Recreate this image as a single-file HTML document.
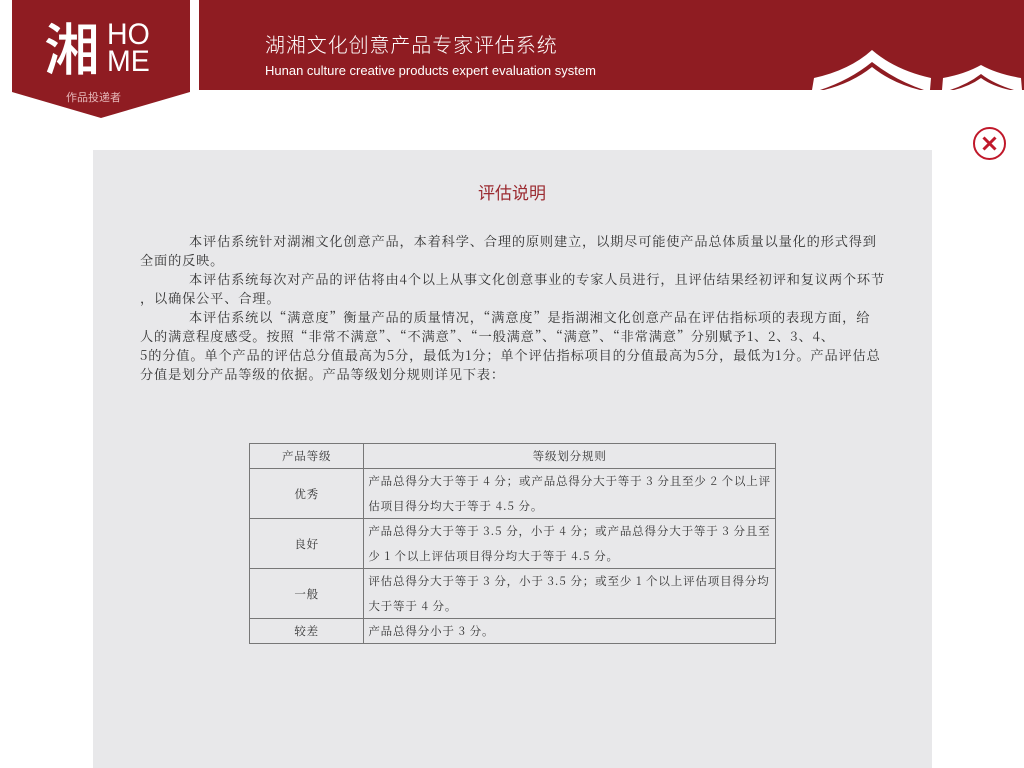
<!DOCTYPE html>
<html><head><meta charset="utf-8">
<style>
*{margin:0;padding:0;box-sizing:border-box}
body{width:1024px;height:768px;overflow:hidden;background:#fff;position:relative;font-family:"Liberation Sans","Noto Sans CJK SC",sans-serif}
.abs{position:absolute}
.bar{left:199px;top:0;width:825px;height:90px;background:#8f1c22}
.cn{left:265px;top:33px;font-size:20px;color:#fff;font-weight:300;letter-spacing:0.9px;white-space:nowrap;line-height:26px}
.en{left:265px;top:63px;font-size:13px;color:#fff;white-space:nowrap;line-height:16px}
.panel{left:93px;top:150px;width:839px;height:618px;background:#e8e8ea}
.title{left:0;width:1024px;top:183px;text-align:center;color:#9b2a30;font-size:17px;line-height:22px}
.para{left:140px;top:231px;width:760px;font-size:13.2px;line-height:19px;color:#333;letter-spacing:0.85px;font-family:"Noto Serif CJK SC","Liberation Serif",serif}
.para div{white-space:nowrap}
.ind{padding-left:49px}
table{position:absolute;left:249px;top:443px;width:527px;border-collapse:collapse;font-family:"Noto Serif CJK SC","Liberation Serif",serif;font-size:11.5px;color:#333}
td{border:1px solid #777;padding:0 4px;letter-spacing:0.85px;white-space:nowrap}
td.c{text-align:center}
td.r{line-height:24.5px}
</style></head><body>
<svg class="abs" style="left:0;top:0" width="200" height="125">
<polygon points="12,0 190,0 190,92 101,118 12,92" fill="#8f1c22"/>
</svg>
<div class="abs" style="left:44px;top:12px;font-size:56px;line-height:70px;color:#fff;font-weight:500;font-family:'Noto Sans CJK SC',sans-serif">湘</div>
<div class="abs" style="left:107px;top:21px;font-size:30px;line-height:27px;color:#fff;font-weight:300;letter-spacing:0px;transform:scaleX(0.95);transform-origin:left">HO<br>ME</div>
<div class="abs" style="left:66px;top:90px;font-size:11px;color:#e6b8ba;line-height:16px">作品投递者</div>
<div class="abs bar"></div>
<svg class="abs" style="left:800px;top:40px" width="224" height="50">
<path d="M12,50 L14,38 Q50,30 72,10 Q95,30 131,38 L130,50 Z" fill="#fff"/>
<path d="M20,50 Q50,40 72,22 Q95,40 124,50 Z" fill="#8f1c22"/>
<path d="M24,50 Q52,43 72,27 Q92,43 120,50 Z" fill="#fff"/>
<path d="M142,50 L143,38 Q165,34 181,25 Q197,34 221,38 L222,50 Z" fill="#fff"/>
<path d="M150,50 Q168,44 181,34 Q194,44 214,50 Z" fill="#8f1c22"/>
<path d="M154,50 Q170,46 181,38 Q192,46 210,50 Z" fill="#fff"/>
</svg>
<div class="abs cn">湖湘文化创意产品专家评估系统</div>
<div class="abs en">Hunan culture creative products expert evaluation system</div>
<svg class="abs" style="left:972px;top:126px" width="36" height="36">
<circle cx="17.5" cy="17.5" r="15.5" fill="none" stroke="#c0182a" stroke-width="2"/>
<path d="M11.5,11.5 L23.5,23.5 M23.5,11.5 L11.5,23.5" stroke="#c0182a" stroke-width="3"/>
</svg>
<div class="abs panel"></div>
<div class="abs title">评估说明</div>
<div class="abs para">
<div class="ind">本评估系统针对湖湘文化创意产品，本着科学、合理的原则建立，以期尽可能使产品总体质量以量化的形式得到</div>
<div>全面的反映。</div>
<div class="ind">本评估系统每次对产品的评估将由4个以上从事文化创意事业的专家人员进行，且评估结果经初评和复议两个环节</div>
<div>，以确保公平、合理。</div>
<div class="ind">本评估系统以“满意度”衡量产品的质量情况，“满意度”是指湖湘文化创意产品在评估指标项的表现方面，给</div>
<div>人的满意程度感受。按照“非常不满意”、“不满意”、“一般满意”、“满意”、“非常满意”分别赋予1、2、3、4、</div>
<div>5的分值。单个产品的评估总分值最高为5分，最低为1分；单个评估指标项目的分值最高为5分，最低为1分。产品评估总</div>
<div>分值是划分产品等级的依据。产品等级划分规则详见下表：</div>
</div>
<table>
<tr style="height:25px"><td class="c" style="width:115px">产品等级</td><td class="c">等级划分规则</td></tr>
<tr style="height:50px"><td class="c">优秀</td><td class="r">产品总得分大于等于 4 分；或产品总得分大于等于 3 分且至少 2 个以上评<br>估项目得分均大于等于 4.5 分。</td></tr>
<tr style="height:50px"><td class="c">良好</td><td class="r">产品总得分大于等于 3.5 分，小于 4 分；或产品总得分大于等于 3 分且至<br>少 1 个以上评估项目得分均大于等于 4.5 分。</td></tr>
<tr style="height:50px"><td class="c">一般</td><td class="r">评估总得分大于等于 3 分，小于 3.5 分；或至少 1 个以上评估项目得分均<br>大于等于 4 分。</td></tr>
<tr style="height:25px"><td class="c">较差</td><td>产品总得分小于 3 分。</td></tr>
</table>
</body></html>
